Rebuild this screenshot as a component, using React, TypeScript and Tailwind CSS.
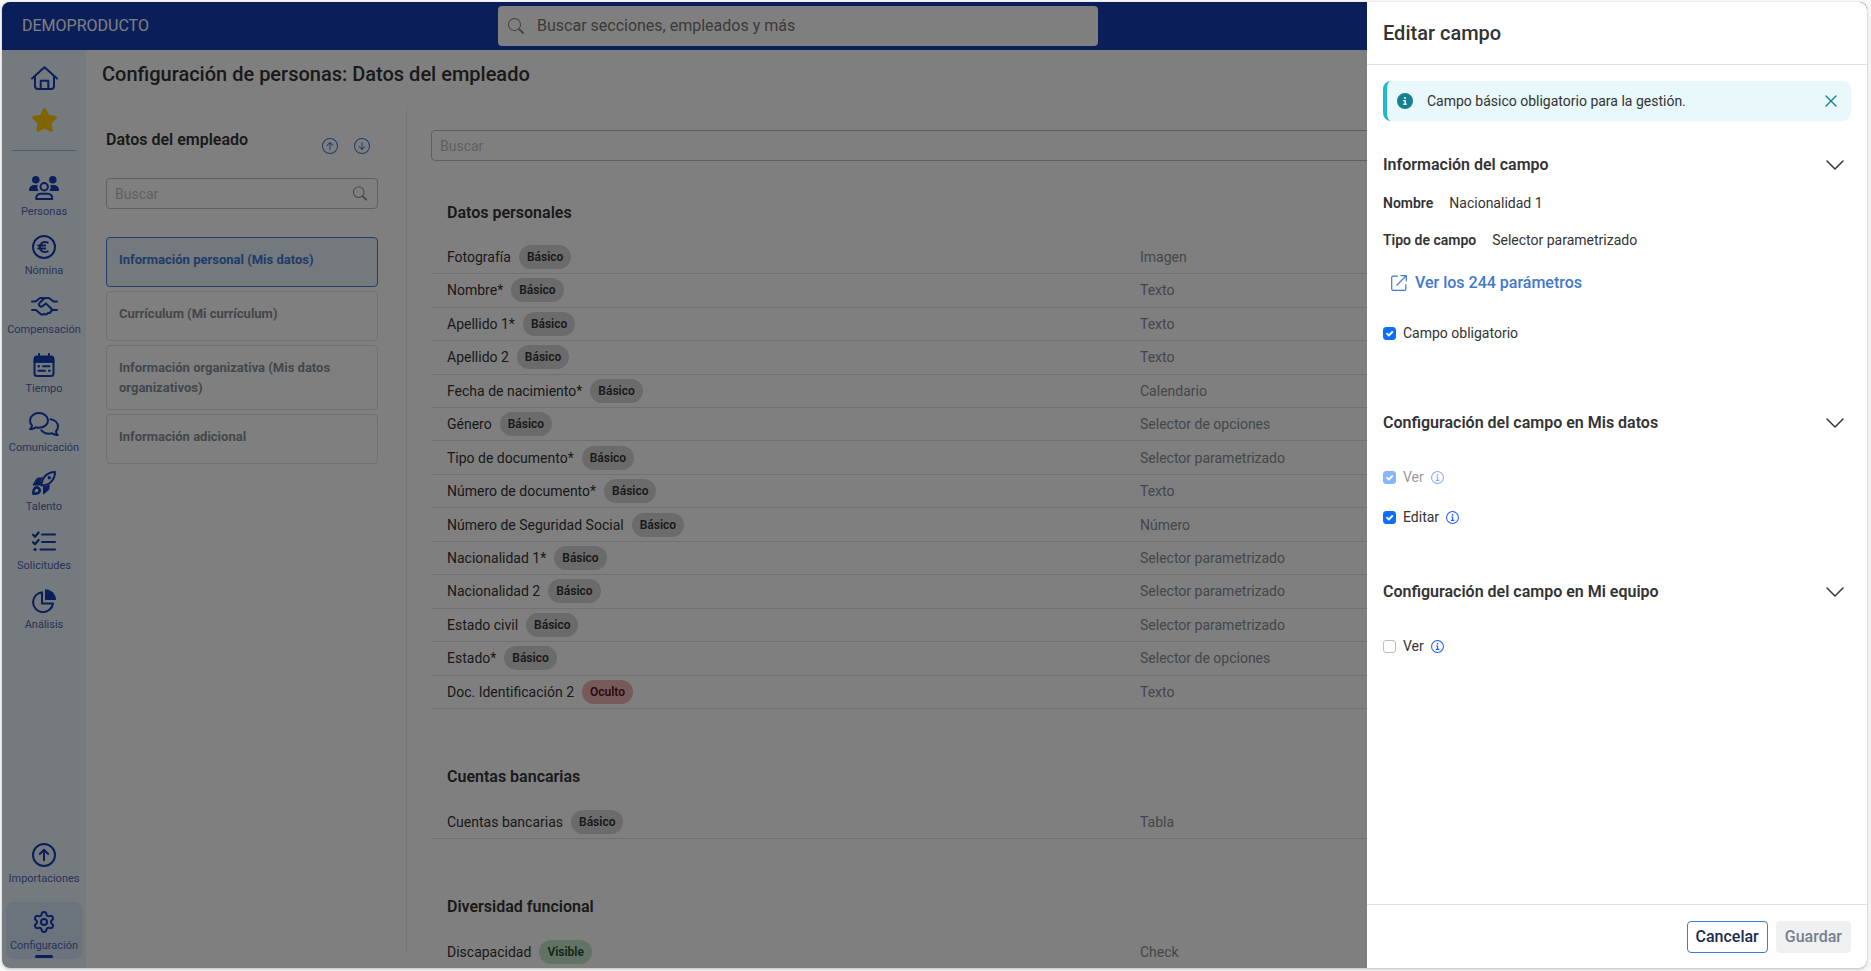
import type { ReactNode } from "react";
import { BsArrowDownCircle, BsArrowUpCircle, BsSearch } from "react-icons/bs";
import { FaCircleInfo, FaStar } from "react-icons/fa6";
import { Settings } from "lucide-react";

function Icon({ children, className = "h-6 w-6" }: { children: ReactNode; className?: string }) {
  return (
    <svg
      viewBox="0 0 24 24"
      fill="none"
      stroke="currentColor"
      strokeWidth={2}
      strokeLinecap="round"
      strokeLinejoin="round"
      className={className}
      aria-hidden="true"
    >
      {children}
    </svg>
  );
}

const HomeIcon = () => (
  <svg
    viewBox="0 0 27 24"
    fill="none"
    stroke="currentColor"
    strokeWidth={2}
    strokeLinecap="round"
    strokeLinejoin="round"
    className="h-6 w-[27px]"
    aria-hidden="true"
  >
    <path d="M1 12.5 13.5 1.2 26 12.5" />
    <path d="M4 10.5V20a3 3 0 0 0 3 3h13a3 3 0 0 0 3-3v-9.5" />
    <path d="M9.7 23v-8.2h7.6V23" />
  </svg>
);

const PeopleIcon = () => (
  <svg viewBox="0 0 30 24" fill="none" className="h-6 w-[30px]" aria-hidden="true">
    <circle cx="6.8" cy="3.8" r="3.8" fill="currentColor" />
    <circle cx="23.8" cy="3.8" r="3.8" fill="currentColor" />
    <path d="M0 15v-1a5 5 0 0 1 5-5h3.5a7 7 0 0 0 1 6H0z" fill="currentColor" />
    <path d="M30 15v-1a5 5 0 0 0-5-5h-3.5a7 7 0 0 1-1 6H30z" fill="currentColor" />
    <circle cx="15.2" cy="10.8" r="3.7" stroke="currentColor" strokeWidth="2" />
    <path
      d="M7.2 23v-1a4.2 4.2 0 0 1 4.2-4.2h7.6a4.2 4.2 0 0 1 4.2 4.2v1z"
      stroke="currentColor"
      strokeWidth="2"
      strokeLinejoin="round"
    />
  </svg>
);

const EuroIcon = () => (
  <Icon>
    <circle cx="12" cy="12" r="11" />
    <path d="M15.7 7.600c-4-1.800-7.700.3-7.700 4.400s3.700 6.200 7.700 4.400M6.200 10.600h7M6.200 13.500h7" />
  </Icon>
);

const HandshakeIcon = () => (
  <svg
    viewBox="0 0 27 24"
    fill="none"
    stroke="currentColor"
    strokeWidth={2}
    strokeLinecap="round"
    strokeLinejoin="round"
    className="h-6 w-[27px]"
    aria-hidden="true"
  >
    <path d="M1 7.500h3.500L9 4h4" />
    <path d="M26 7.500h-3.500L18 4h-2.500c-1.500 0-2.300.4-3.200 1.200L8.500 9a2.200 2.200 0 0 0 3.200 3l3.100-2.600 6.400 6.100" />
    <path d="M1 16h4l4 3.600c1.500 1.300 3 1.500 4 .3 1.600 1 3.300.5 3.900-1 1.600.3 2.900-.4 3.300-2.200L22 16h4" />
  </svg>
);

const CalendarIcon = () => (
  <Icon>
    <path d="M2 9V5.500A2.500 2.500 0 0 1 4.500 3h15A2.500 2.500 0 0 1 22 5.500V9z" fill="currentColor" strokeWidth="1" />
    <path d="M2.500 8v12.500A2.500 2.500 0 0 0 5 23h14a2.500 2.500 0 0 0 2.500-2.500V8M7 1v3M17 1v3M11 13.200h6.500M6.500 17.800H13" />
    <path d="M6.700 13.200h.1M17.300 17.800h.1" strokeWidth="2.5" />
  </Icon>
);

const CommentsIcon = () => (
  <svg
    viewBox="0 0 30 24"
    fill="none"
    stroke="currentColor"
    strokeWidth={2}
    strokeLinecap="round"
    strokeLinejoin="round"
    className="h-6 w-[30px]"
    aria-hidden="true"
  >
    <path d="M10 1c5 0 9 3.300 9 7.400s-4 7.400-9 7.400a11 11 0 0 1-3.200-.5C5.300 16.300 3.500 17.100 1.200 17.200c1-1.100 1.600-2.200 1.800-3.800C1.700 12 1 10.300 1 8.400 1 4.300 5 1 10 1z" />
    <path d="M21.500 7.200c4.300.6 7.500 3.600 7.500 7.300 0 1.900-.8 3.600-2.100 4.900.2 1.600.9 2.700 1.900 3.700-2.300-.1-4.100-.8-5.600-1.800-1 .3-2.100.4-3.200.4-3.200 0-6-1.300-7.600-3.300" />
  </svg>
);

const RocketIcon = () => (
  <Icon>
    <path d="M9.500 14.500C9.800 7 14.500 1.200 23 1 23 9.500 17 14.300 9.500 14.500z" />
    <path
      d="M10 7H6.500a2 2 0 0 0-1.800 1L1 14h7.500C8 11.500 8.700 9 10 7zM17 14v3.500a2 2 0 0 1-1 1.800L11.500 23v-7.500c2 0 4-.5 5.500-1.500z"
      fill="currentColor"
      strokeWidth="1"
    />
    <circle cx="17.3" cy="6.7" r="1.7" fill="currentColor" stroke="none" />
    <path
      d="M1.300 22.700c0-2.500.3-4.300 1.300-5.300a3 3 0 0 1 4.200 0 3 3 0 0 1 0 4.200c-1 1-3 1.100-5.500 1.100z"
      strokeWidth="2.5"
    />
  </Icon>
);

const ListIcon = () => (
  <Icon>
    <path d="M10 4.500h13M10 12h13M8.500 19.500H23" />
    <path d="m1 4.700 2 2L6.600 2.500M1 12.200l2 2L6.600 10" strokeWidth="2.2" />
    <path d="M3 19.500h.1" strokeWidth="3" />
  </Icon>
);

const PieIcon = () => (
  <Icon>
    <path d="M13 .2A11 11 0 0 1 24 11H13z" fill="currentColor" stroke="none" />
    <path d="M10 3.200a10 10 0 1 0 11 11.300H10z" />
  </Icon>
);

const UploadIcon = () => (
  <Icon>
    <circle cx="12" cy="12" r="11" />
    <path d="M12 17.300V7M7.800 11 12 6.800l4.200 4.200" />
  </Icon>
);

const InfoIcon = () => (
  <Icon className="h-[13px] w-[13px]">
    <circle cx="12" cy="12" r="11" />
    <path d="M9.500 11h2.800v6M9 17.300h6.500" strokeLinecap="butt" />
    <path d="M12 7.200h.1" strokeWidth="3" />
  </Icon>
);

const NAV = [
  { label: "Personas", icon: <PeopleIcon /> },
  { label: "Nómina", icon: <EuroIcon /> },
  { label: "Compensación", icon: <HandshakeIcon /> },
  { label: "Tiempo", icon: <CalendarIcon /> },
  { label: "Comunicación", icon: <CommentsIcon /> },
  { label: "Talento", icon: <RocketIcon /> },
  { label: "Solicitudes", icon: <ListIcon /> },
  { label: "Análisis", icon: <PieIcon /> },
];

const GROUPS = [
  "Información personal (Mis datos)",
  "Currículum (Mi currículum)",
  "Información organizativa (Mis datos organizativos)",
  "Información adicional",
];

type Status = "Básico" | "Oculto" | "Visible";
type Field = { name: string; status: Status; type: string };

const PERSONAL: Field[] = [
  { name: "Fotografía", status: "Básico", type: "Imagen" },
  { name: "Nombre*", status: "Básico", type: "Texto" },
  { name: "Apellido 1*", status: "Básico", type: "Texto" },
  { name: "Apellido 2", status: "Básico", type: "Texto" },
  { name: "Fecha de nacimiento*", status: "Básico", type: "Calendario" },
  { name: "Género", status: "Básico", type: "Selector de opciones" },
  { name: "Tipo de documento*", status: "Básico", type: "Selector parametrizado" },
  { name: "Número de documento*", status: "Básico", type: "Texto" },
  { name: "Número de Seguridad Social", status: "Básico", type: "Número" },
  { name: "Nacionalidad 1*", status: "Básico", type: "Selector parametrizado" },
  { name: "Nacionalidad 2", status: "Básico", type: "Selector parametrizado" },
  { name: "Estado civil", status: "Básico", type: "Selector parametrizado" },
  { name: "Estado*", status: "Básico", type: "Selector de opciones" },
  { name: "Doc. Identificación 2", status: "Oculto", type: "Texto" },
];

const BADGE: Record<Status, string> = {
  Básico: "bg-[#d6d6d6] text-[#333333]",
  Oculto: "bg-[#eeb4b4] text-[#58151c]",
  Visible: "bg-[#c3e6cb] text-[#1e4d2b]",
};

function NavItem({ label, icon, active }: { label: string; icon: ReactNode; active?: boolean }) {
  return (
    <a
      href="#"
      className={`flex h-[57px] flex-col items-center rounded-lg pt-2 text-[#143cb2] ${active ? "bg-[#d7e6fb]" : ""}`}
    >
      {icon}
      <span className="mt-1 text-[11px] leading-4 text-[#5068b4]">{label}</span>
      {active && <span className="mt-px h-[3px] w-[18px] rounded-full bg-[#143cb2]" />}
    </a>
  );
}

function FieldSection({ title, fields, tall }: { title: string; fields: Field[]; tall?: boolean }) {
  return (
    <section>
      <h2 className="mb-4 px-4 text-base leading-6 font-semibold text-[#333333]">{title}</h2>
      <table className={`w-full table-fixed text-sm ${tall ? "h-[468px]" : "h-[34px]"}`}>
        <tbody>
          {fields.map((f) => (
            <tr key={f.name} className="border-b border-[#dee2e6]">
              <td className="px-4 py-0 text-[#333333]">
                <div className="flex items-center gap-2">
                  {f.name}
                  <span className={`rounded-full px-2 text-xs leading-6 font-semibold ${BADGE[f.status]}`}>
                    {f.status}
                  </span>
                </div>
              </td>
              <td className="px-4 py-0 text-[#868e96]">{f.type}</td>
            </tr>
          ))}
        </tbody>
      </table>
    </section>
  );
}

function SectionTitle({ children }: { children: ReactNode }) {
  return (
    <h3>
      <button
        type="button"
        className="flex w-full items-center justify-between pr-[7px] text-base leading-6 font-semibold"
      >
        {children}
        <svg
          viewBox="0 0 18 10"
          fill="none"
          stroke="currentColor"
          strokeWidth="1.5"
          strokeLinecap="round"
          strokeLinejoin="round"
          className="h-[10px] w-[18px]"
          aria-hidden="true"
        >
          <path d="m1 1 8 8 8-8" />
        </svg>
      </button>
    </h3>
  );
}

function Check({
  id,
  label,
  checked,
  disabled,
  info,
}: {
  id: string;
  label: string;
  checked?: boolean;
  disabled?: boolean;
  info?: boolean;
}) {
  return (
    <div className={`flex h-5 items-center ${disabled ? "opacity-50" : ""}`}>
      <span className="relative mr-[7px] flex">
        <input
          id={id}
          type="checkbox"
          defaultChecked={checked}
          disabled={disabled}
          className="peer h-[13px] w-[13px] appearance-none rounded-[3px] border border-[#bfbfbf] bg-white checked:border-[#0d6efd] checked:bg-[#0d6efd]"
        />
        <svg
          viewBox="0 0 13 13"
          fill="none"
          stroke="white"
          strokeWidth="1.8"
          strokeLinecap="round"
          strokeLinejoin="round"
          className="pointer-events-none absolute inset-0 hidden peer-checked:block"
          aria-hidden="true"
        >
          <path d="m4 6.700 1.800 1.800L9.300 5" />
        </svg>
      </span>
      <label htmlFor={id}>{label}</label>
      {info && (
        <span className="ml-[7px] text-[#1f5eff]">
          <InfoIcon />
        </span>
      )}
    </div>
  );
}

function EditDrawer() {
  return (
    <aside
      role="dialog"
      aria-label="Editar campo"
      className="absolute inset-y-0 right-0 flex w-[500px] flex-col bg-white text-sm leading-5 text-[#333333]"
    >
      <header className="border-b border-[#dee2e6] px-4 py-4">
        <h2 className="text-xl leading-[30px] font-medium">Editar campo</h2>
      </header>

      <div className="flex-1 px-4 pt-4">
        <div className="flex h-10 items-center rounded-lg border-l-4 border-[#22b8cf] bg-[#e8f8fb] pr-[13px] pl-[10px]">
          <FaCircleInfo className="mr-[14px] h-4 w-4 text-[#15808f]" />
          <p className="flex-1">Campo básico obligatorio para la gestión.</p>
          <button type="button" aria-label="Cerrar" className="text-[#15808f]">
            <svg
              viewBox="0 0 14 14"
              stroke="currentColor"
              strokeWidth="1.4"
              strokeLinecap="round"
              className="h-[14px] w-[14px]"
              aria-hidden="true"
            >
              <path d="m2 2 10 10M12 2 2 12" />
            </svg>
          </button>
        </div>

        <div className="mt-8">
          <SectionTitle>Información del campo</SectionTitle>
          <dl className="mt-4 space-y-[17px]">
            <div className="flex gap-4">
              <dt className="font-semibold">Nombre</dt>
              <dd>Nacionalidad 1</dd>
            </div>
            <div className="flex gap-4">
              <dt className="font-semibold">Tipo de campo</dt>
              <dd>Selector parametrizado</dd>
            </div>
          </dl>
          <a
            href="#"
            className="mt-[21px] mb-7 flex items-center gap-2 px-2 text-base leading-6 font-medium text-[#4078d1]"
          >
            <svg
              viewBox="0 0 16 16"
              fill="none"
              stroke="currentColor"
              strokeWidth="1.2"
              strokeLinecap="round"
              strokeLinejoin="round"
              className="h-4 w-4"
              aria-hidden="true"
            >
              <path d="M6.500 1.200H2A1.300 1.300 0 0 0 .7 2.500V14A1.300 1.300 0 0 0 2 15.300h11.500a1.300 1.300 0 0 0 1.300-1.300V9.500M10 .7h5.300V6M15.300.7 6 10" />
            </svg>
            Ver los 244 parámetros
          </a>
          <Check id="required" label="Campo obligatorio" checked />
        </div>

        <div className="mt-[68px] mb-[53px]">
          <SectionTitle>Configuración del campo en Mis datos</SectionTitle>
          <div className="mt-8 space-y-5">
            <Check id="own-view" label="Ver" checked disabled info />
            <Check id="own-edit" label="Editar" checked info />
          </div>
        </div>

        <SectionTitle>Configuración del campo en Mi equipo</SectionTitle>
        <div className="mt-8">
          <Check id="team-view" label="Ver" info />
        </div>
      </div>

      <footer className="flex justify-end gap-2 border-t border-[#dee2e6] px-4 pt-4 pb-[15px] text-base font-medium">
        <button type="button" className="h-8 rounded border border-[#3c7bd9] px-2 text-[#1b2a4e]">
          Cancelar
        </button>
        <button type="button" disabled className="h-8 rounded border border-[#eef0f2] bg-[#eef0f2] px-2 text-[#76808a]">
          Guardar
        </button>
      </footer>
    </aside>
  );
}

export default function App() {
  return (
    <div className="h-screen bg-[#f7f7f7] pt-[2px] pr-1 pb-[3px] pl-[2px] font-['Roboto',sans-serif]">
      <div className="relative flex h-full flex-col overflow-hidden rounded-lg bg-white shadow-[0_1px_3px_rgba(0,0,0,0.25)]">
        <header className="flex h-12 shrink-0 items-center bg-[#143cb2] px-5">
          <span className="w-[476px] text-base text-white">DEMOPRODUCTO</span>
          <label className="flex h-10 w-[600px] items-center rounded bg-white px-[10px]">
            <BsSearch className="mr-[13px] h-4 w-4 text-[#868686]" />
            <input
              type="search"
              aria-label="Buscar"
              placeholder="Buscar secciones, empleados y más"
              className="flex-1 text-base outline-none placeholder:text-[#757575]"
            />
          </label>
        </header>

        <div className="flex min-h-0 flex-1">
          <nav className="flex w-21 shrink-0 flex-col bg-[#ebf4ff] px-1 pt-4 pb-[9px]">
            <div className="mb-4 flex flex-col items-center gap-[18px] border-b border-transparent text-[#143cb2]">
              <HomeIcon />
              <FaStar className="h-6 w-[27px] text-[#ffc800]" />
              <hr className="w-16 border-[#9bb8ef]" />
            </div>
            <div className="space-y-[2px]">
              {NAV.map((item) => (
                <NavItem key={item.label} {...item} />
              ))}
            </div>
            <div className="mt-auto space-y-[10px]">
              <NavItem label="Importaciones" icon={<UploadIcon />} />
              <NavItem label="Configuración" icon={<Settings className="h-6 w-6" />} active />
            </div>
          </nav>

          <main className="flex min-w-0 flex-1 flex-col text-[#333333]">
            <h1 className="px-4 pt-[9px] pb-[17px] text-xl leading-[30px] font-medium">
              Configuración de personas: Datos del empleado
            </h1>
            <div className="flex min-h-0 flex-1">
              <div className="mb-[15px] w-[321px] shrink-0 border-r border-[#e9ecef] pt-[22px] pr-7 pl-5">
                <div className="flex h-[26px] justify-between pr-2">
                  <h2 className="text-base leading-6 font-semibold">Datos del empleado</h2>
                  <div className="flex gap-4 self-end text-[#3c7bd9]">
                    <button type="button" aria-label="Subir">
                      <BsArrowUpCircle className="h-4 w-4" />
                    </button>
                    <button type="button" aria-label="Bajar">
                      <BsArrowDownCircle className="h-4 w-4" />
                    </button>
                  </div>
                </div>
                <label className="mt-6 flex h-[31px] items-center rounded border border-[#bfbfbf] px-2 text-[#868686]">
                  <input
                    type="search"
                    aria-label="Buscar sección"
                    placeholder="Buscar"
                    className="w-full text-sm outline-none placeholder:text-[#bfbfbf]"
                  />
                  <BsSearch className="mr-[2px] h-[15px] w-[15px]" />
                </label>
                <div className="mt-7 space-y-1">
                  {GROUPS.map((group, i) => (
                    <button
                      key={group}
                      type="button"
                      className={`flex min-h-[50px] w-full items-start rounded border px-3 pt-3 pb-[11px] text-left text-[13px] leading-5 font-bold ${
                        i === 0 ? "border-[#3c7bd9] bg-[#e9f2fc] text-[#4078d1]" : "border-[#e0e0e0] text-[#868e96]"
                      }`}
                    >
                      {group}
                    </button>
                  ))}
                </div>
              </div>

              <div className="min-w-0 flex-1 overflow-hidden pt-6 pr-[50px] pl-6">
                <input
                  type="search"
                  aria-label="Buscar campo"
                  placeholder="Buscar"
                  className="h-[31px] w-full rounded border border-[#bfbfbf] px-2 text-sm placeholder:text-[#bfbfbf]"
                />
                <div className="mt-10 space-y-14">
                  <FieldSection title="Datos personales" fields={PERSONAL} tall />
                  <FieldSection
                    title="Cuentas bancarias"
                    fields={[{ name: "Cuentas bancarias", status: "Básico", type: "Tabla" }]}
                  />
                  <FieldSection
                    title="Diversidad funcional"
                    fields={[{ name: "Discapacidad", status: "Visible", type: "Check" }]}
                  />
                </div>
              </div>
            </div>
          </main>
        </div>

        <div className="absolute inset-0 bg-black/50" />
        <EditDrawer />
      </div>
    </div>
  );
}
